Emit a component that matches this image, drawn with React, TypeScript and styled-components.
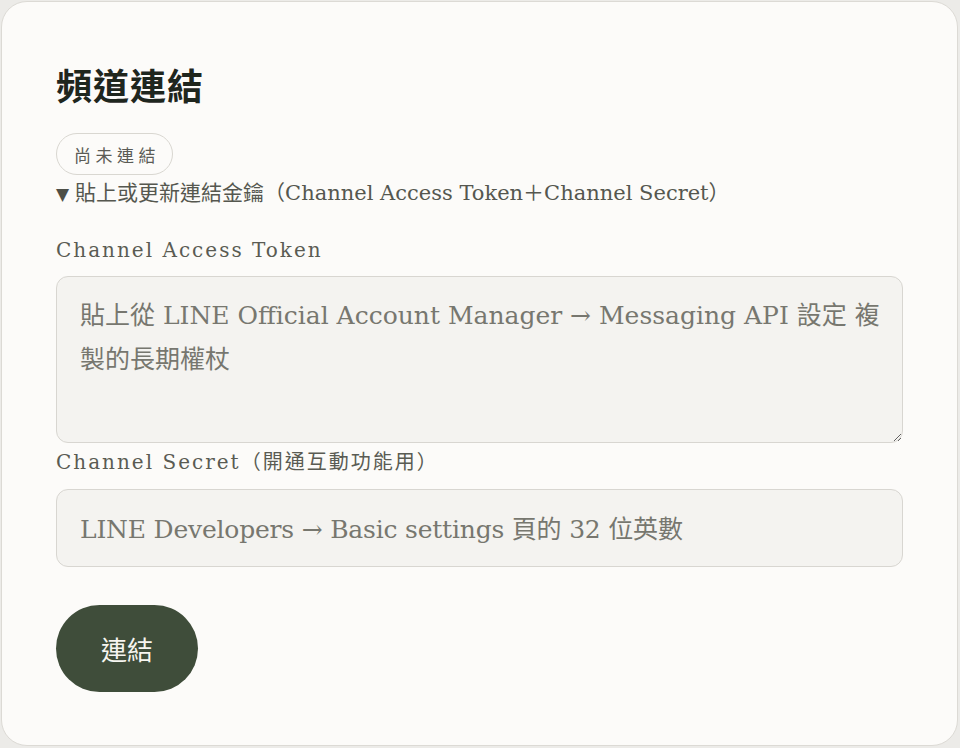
import React from "react";
import styled, { createGlobalStyle } from "styled-components";

const FONT = `"DejaVu Serif", "Noto Sans CJK TC", serif`;

const GlobalStyle = createGlobalStyle`
  html, body {
    margin: 0;
    padding: 0;
    background: #ecebe8;
  }
  body {
    font-family: ${FONT};
  }
  * {
    box-sizing: border-box;
  }
`;

const Page = styled.div`
  width: 960px;
  height: 748px;
  padding: 1px 2px 2px 1px;
  background: #ecebe8;
`;

const Card = styled.section`
  height: 100%;
  background: #fcfbf9;
  border: 1px solid #dcdad5;
  border-radius: 26px;
  padding: 58px 54px 0 54px;
  display: flex;
  flex-direction: column;
  align-items: flex-start;
`;

const Title = styled.h2`
  margin: 0;
  font-family: "Noto Sans CJK TC", sans-serif;
  font-size: 36px;
  font-weight: 700;
  line-height: 48px;
  color: #1f261e;
  letter-spacing: 1px;
`;

const Badge = styled.span`
  margin-top: 25px;
  height: 42px;
  padding: 0 12px 0 17px;
  display: inline-flex;
  align-items: center;
  border: 1px solid #d9d7d1;
  border-radius: 21px;
  font-family: "Noto Sans CJK TC", sans-serif;
  font-size: 17px;
  letter-spacing: 4.5px;
  color: #5b5b56;
  background: #fcfbf9;
`;

const Details = styled.details`
  width: 100%;
  margin-top: 2px;
`;

const Summary = styled.summary`
  list-style: none;
  cursor: pointer;
  font-size: 21px;
  line-height: 32px;
  color: #55574f;
  &::-webkit-details-marker {
    display: none;
  }
`;

const Caret = styled.span`
  font-family: "DejaVu Sans", sans-serif;
  font-size: 17px;
  margin-right: 6px;
  color: #4d4f47;
`;

const Label = styled.label<{ $gap: number }>`
  display: block;
  font-size: 20px;
  line-height: 30px;
  letter-spacing: 2px;
  color: #5a5b53;
  margin-top: ${(p) => p.$gap}px;
`;

const fieldBase = `
  width: 100%;
  display: block;
  background: #f4f3f0;
  border: 1px solid #d8d6d1;
  border-radius: 12px;
  font-family: ${FONT};
  font-size: 25px;
  color: #3a3b36;
  outline: none;
  &::placeholder {
    color: #77776f;
  }
`;

const TokenArea = styled.textarea`
  ${fieldBase}
  margin-top: 11px;
  height: 167px;
  padding: 17px 14px 15px 23px;
  line-height: 44px;
  resize: vertical;
`;

const SecretInput = styled.input`
  ${fieldBase}
  margin-top: 12px;
  height: 78px;
  padding: 2px 23px 0;
  letter-spacing: -0.2px;
`;

const ConnectButton = styled.button`
  margin-top: 38px;
  width: 142px;
  height: 87px;
  border: none;
  border-radius: 44px;
  background: #3f4d3a;
  color: #f6f5f0;
  font-family: "Noto Sans CJK TC", sans-serif;
  font-size: 26px;
  cursor: pointer;
`;

export default function App() {
  return (
    <>
      <GlobalStyle />
      <Page>
        <Card>
          <Title>頻道連結</Title>
          <Badge>尚未連結</Badge>
          <Details open>
            <Summary>
              <Caret>▼</Caret>
              貼上或更新連結金鑰（Channel Access Token＋Channel Secret）
            </Summary>
            <Label $gap={25} htmlFor="token">
              Channel Access Token
            </Label>
            <TokenArea
              id="token"
              placeholder="貼上從 LINE Official Account Manager → Messaging API 設定 複製的長期權杖"
            />
            <Label $gap={4} htmlFor="secret">
              Channel Secret（開通互動功能用）
            </Label>
            <SecretInput
              id="secret"
              placeholder="LINE Developers → Basic settings 頁的 32 位英數"
            />
          </Details>
          <ConnectButton>連結</ConnectButton>
        </Card>
      </Page>
    </>
  );
}
